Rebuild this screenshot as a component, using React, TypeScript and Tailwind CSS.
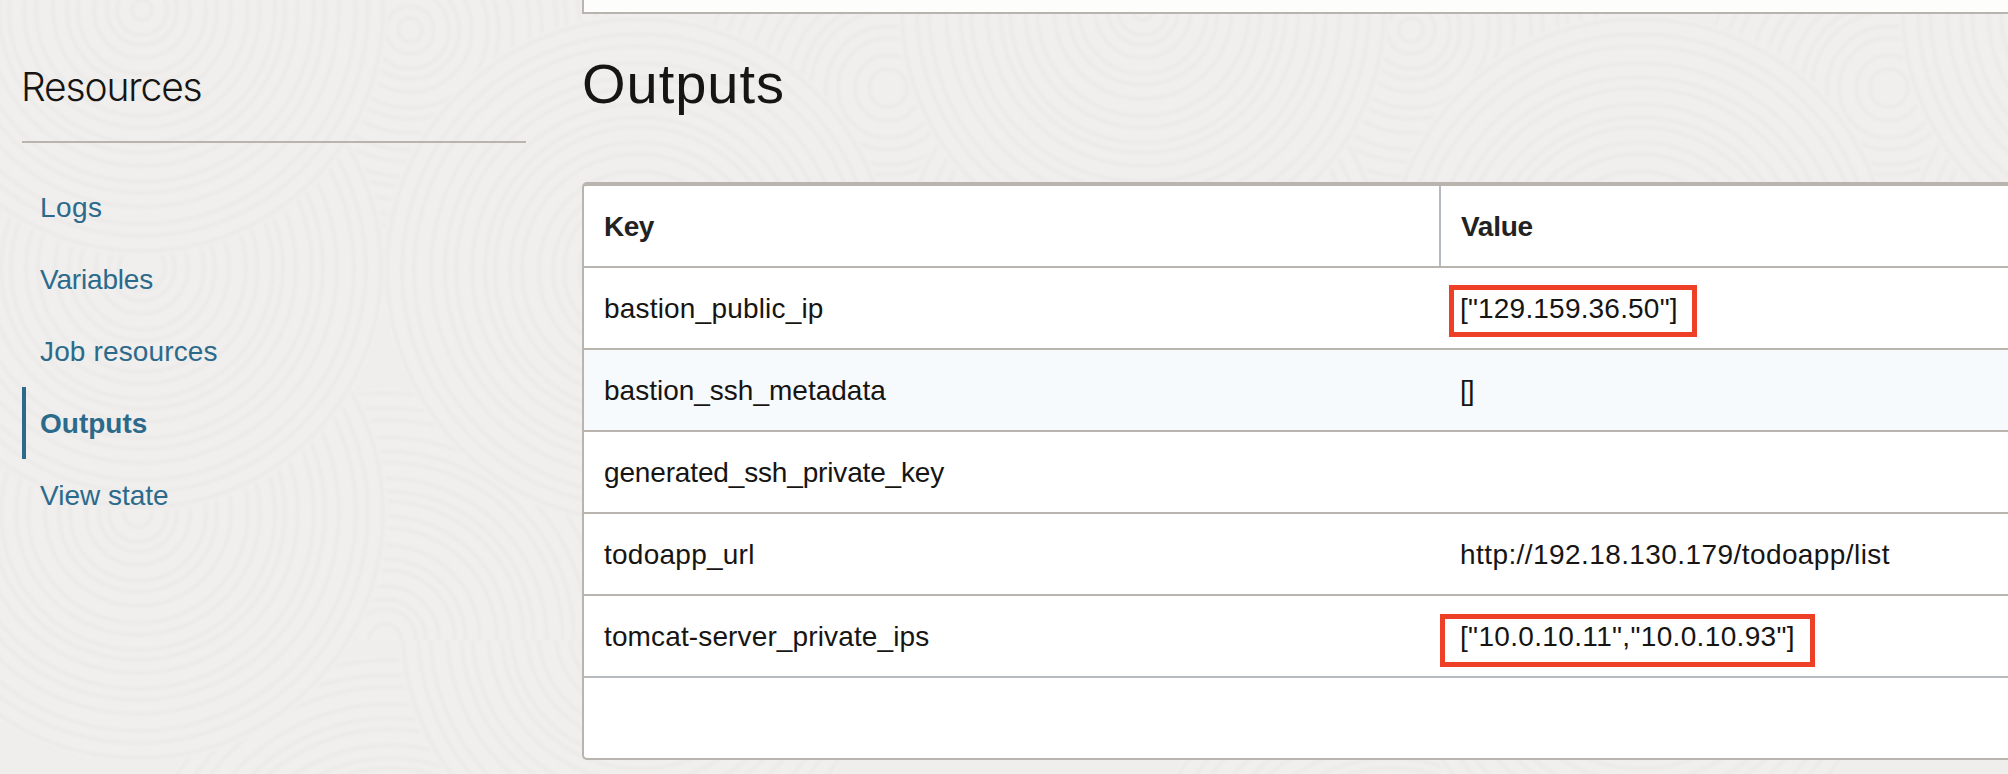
type NavItem = { label: string; tracking: string; active?: boolean };
type OutputRow = {
  name: string;
  nameTracking: string;
  value: string;
  valueTracking: string;
  mark?: string;
};
type Disc = { cx: number; cy: number; r: number; upperHalf?: boolean };

const navItems: NavItem[] = [
  { label: "Logs", tracking: "tracking-[0.4px]" },
  { label: "Variables", tracking: "tracking-[-0.18px]" },
  { label: "Job resources", tracking: "tracking-[0.14px]" },
  { label: "Outputs", tracking: "tracking-normal", active: true },
  { label: "View state", tracking: "tracking-normal" },
];

const rows: OutputRow[] = [
  {
    name: "bastion_public_ip",
    nameTracking: "tracking-[0.19px]",
    value: '["129.159.36.50"]',
    valueTracking: "tracking-[0.19px]",
    mark: "left-[9px] top-[17px] h-[52px] w-[248px]",
  },
  {
    name: "bastion_ssh_metadata",
    nameTracking: "tracking-normal",
    value: "[]",
    valueTracking: "tracking-[-1px]",
  },
  {
    name: "generated_ssh_private_key",
    nameTracking: "tracking-[-0.155px]",
    value: "",
    valueTracking: "tracking-normal",
  },
  {
    name: "todoapp_url",
    nameTracking: "tracking-[0.25px]",
    value: "http://192.18.130.179/todoapp/list",
    valueTracking: "tracking-[0.42px]",
  },
  {
    name: "tomcat-server_private_ips",
    nameTracking: "tracking-[0.13px]",
    value: '["10.0.10.11","10.0.10.93"]',
    valueTracking: "tracking-[0.34px]",
    mark: "left-[0px] top-[18px] h-[53px] w-[375px]",
  },
];

// Overlapping ripple discs, painted back to front; the tile repeats every 1001px.
const TILE = 1001;
const discs: Disc[] = [
  { cx: 410, cy: 30, r: 260 },
  { cx: 390, cy: 915, r: 260 },
  { cx: 640, cy: 630, r: 242 },
  { cx: 385, cy: 640, r: 252, upperHalf: true },
  { cx: 888, cy: 88, r: 190 },
  { cx: 638, cy: 270, r: 256 },
  { cx: 138, cy: 513, r: 250 },
  { cx: 142, cy: 268, r: 244 },
  { cx: 142, cy: 10, r: 246 },
];

function Ripple({ cx, cy, r, upperHalf }: Disc) {
  const rings: number[] = [];
  for (let i = 0, q = r - 5; q > 8; i++, q -= 10 + ((i * 5) % 8)) rings.push(q);
  const arc = (q: number) => `M${cx - q} ${cy}A${q} ${q} 0 0 1 ${cx + q} ${cy}`;
  return (
    <g fill="none" stroke="#ebeae8" strokeWidth={3.5}>
      {upperHalf ? (
        <path d={arc(r)} fill="#f0efed" stroke="none" />
      ) : (
        <circle cx={cx} cy={cy} r={r} fill="#f0efed" stroke="none" />
      )}
      {rings.map((q) => (upperHalf ? <path key={q} d={arc(q)} /> : <circle key={q} cx={cx} cy={cy} r={q} />))}
    </g>
  );
}

function Backdrop() {
  return (
    <svg className="absolute inset-0 h-full w-full" viewBox="0 0 2008 774" aria-hidden="true">
      <g className="blur-[1.6px]">
        {[-1, 0, 1, 2].map((t) => (
          <g key={t} transform={`translate(${t * TILE} 0)`}>
            {discs.map((d) => (
              <Ripple key={`${d.cx}-${d.cy}`} {...d} />
            ))}
          </g>
        ))}
      </g>
    </svg>
  );
}

function Sidebar() {
  return (
    <aside className="ml-[22px] w-[504px] shrink-0">
      <h2 className="flex h-[143px] items-end border-b-2 border-[#bab4af] pb-7 font-['Inter',sans-serif] text-[39px] leading-[52px] font-light tracking-[-1.15px] text-[#161513]">
        <span className="-ml-px">Resources</span>
      </h2>
      <nav className="mt-7 flex flex-col">
        {navItems.map((item) => (
          <a
            key={item.label}
            className={`flex h-[72px] items-center border-l-4 pt-0.5 pl-[14px] text-[#2b6a8b] ${item.tracking} ${
              item.active ? "border-[#2b6a8b] font-bold" : "border-transparent"
            }`}
          >
            {item.label}
          </a>
        ))}
      </nav>
    </aside>
  );
}

function OutputsTable() {
  return (
    <div className="mt-[66px] h-[578px] overflow-hidden rounded-l-[5px] border-t-4 border-b-2 border-l-2 border-[#bab4af] bg-white">
      <div className="flex h-[82px] border-b-2 border-[#bab4af] font-bold text-[#222]">
        <div className="flex w-[855px] items-center pt-0.5 pl-5 tracking-[-0.5px]">Key</div>
        <div className="flex flex-1 items-center border-l-2 border-[#b5bbc0] pt-0.5 pl-5 tracking-[-0.27px]">
          Value
        </div>
      </div>
      {rows.map((row, i) => (
        <div
          key={row.name}
          className={`flex h-[82px] border-b-2 text-[#161513] ${
            i === rows.length - 1 ? "border-[#b5bbc0]" : "border-[#bab4af]"
          } ${i === 1 ? "bg-[#f6fafd]" : "bg-white"}`}
        >
          <div className={`flex w-[856px] items-center pt-0.5 pl-5 ${row.nameTracking}`}>{row.name}</div>
          <div className={`relative flex flex-1 items-center pt-0.5 pl-5 ${row.valueTracking}`}>
            {row.value}
            {row.mark && <span className={`absolute border-5 border-[#ee4026] ${row.mark}`} />}
          </div>
        </div>
      ))}
    </div>
  );
}

export default function App() {
  return (
    <div className="relative h-[774px] w-full overflow-hidden bg-[#efeeec] font-['Liberation_Sans',Arial,sans-serif] text-[28px] leading-9">
      <Backdrop />
      <div className="relative flex">
        <Sidebar />
        <main className="ml-14 min-w-0 flex-1">
          <div className="h-[14px] border-b-2 border-l-2 border-[#bab4af] bg-[#fdfdfc]" />
          <h1 className="mt-[38px] flex h-16 items-center text-[56px] leading-16 tracking-[0.98px] text-[#161513]">
            Outputs
          </h1>
          <OutputsTable />
        </main>
      </div>
    </div>
  );
}
